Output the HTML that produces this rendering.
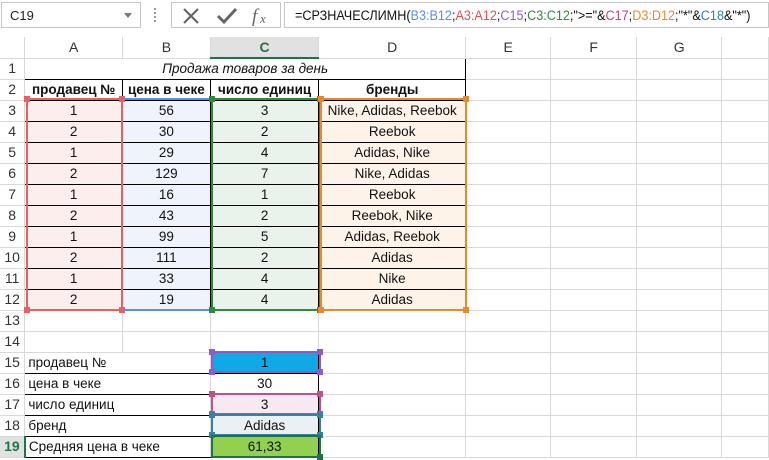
<!DOCTYPE html>
<html><head><meta charset="utf-8"><style>
*{box-sizing:border-box;margin:0;padding:0}
body{width:769px;height:460px;overflow:hidden;background:#fff;font-family:"Liberation Sans",sans-serif;position:relative}
.fb{position:absolute;left:0;top:0;width:769px;height:37px;background:#fff}
.nb{position:absolute;left:1px;top:2px;width:140px;height:26px;border:1px solid #c6c6c6;font-size:13px;padding:5px 8px;color:#222}
.nb:after{content:"";position:absolute;right:8px;top:10px;border:4px solid transparent;border-top:5px solid #777}
.dots{position:absolute;left:154px;top:8px;width:2px;height:14px;border-left:2px dotted #999}
.btns{position:absolute;left:171px;top:2px;width:110px;height:26px;border:1px solid #c6c6c6}
.ff{position:absolute;left:284px;top:2px;width:485px;height:26px;border:1px solid #c6c6c6;font-size:13.5px;padding:5px 10px;white-space:nowrap;color:#111;overflow:hidden}
.ff span.in{display:inline-block;transform:scaleX(0.935);transform-origin:0 0}
table{position:absolute;left:0;top:37px;border-collapse:collapse;table-layout:fixed;font-size:13.5px}
td{height:21px;border:1px solid #d9d9d9;text-align:center;white-space:nowrap;overflow:hidden;padding:0 2px;color:#111;line-height:19px}
td.h{background:#fff;color:#333;font-size:14px}
tr.ch td{height:21px;border-top:none}
td.rh{text-align:center;color:#333;font-size:14px;border-left:none}
.a{background:#fdeeee}.b{background:#eef3fc}.c{background:#eaf3eb}.d{background:#fdf3e8}
.k{border:1px solid #000}
.l{text-align:left;padding-left:3px;border-top:1px solid #000;border-bottom:1px solid #000}
.box{position:absolute;border:2px solid}
.box i{position:absolute;width:6px;height:6px}
</style></head><body>
<div class="fb">
<div class="nb">C19</div>
<div class="dots"></div>
<div class="btns">
<svg width="110" height="26" style="position:absolute;left:0;top:0">
<path d="M12 6 L26 20 M26 6 L12 20" stroke="#666" stroke-width="2.2" fill="none"/>
<path d="M46 13 L52 19 L64 6" stroke="#666" stroke-width="3" fill="none"/>
<text x="80" y="19" font-family="Liberation Serif" font-style="italic" font-size="19" fill="#666">f</text>
<text x="88" y="20" font-family="Liberation Serif" font-style="italic" font-size="13" fill="#666">x</text>
</svg></div>
<div class="ff"><span class="in">=СРЗНАЧЕСЛИМН(<span style="color:#5b8ee6">B3:B12</span>;<span style="color:#e05050">A3:A12</span>;<span style="color:#8e5cc5">C15</span>;<span style="color:#2e8b3e">C3:C12</span>;"&gt;="&amp;<span style="color:#c0408a">C17</span>;<span style="color:#e8892a">D3:D12</span>;"*"&amp;<span style="color:#3a7fa0">C18</span>&amp;"*")</span></div>
</div>
<table>
<colgroup><col style="width:25px"><col style="width:98px"><col style="width:88px"><col style="width:109px"><col style="width:147px"><col style="width:88px"><col style="width:88px"><col style="width:88px"><col style="width:48px"></colgroup>
<tr class="ch"><td class="h" style="border-left:none"></td><td class="h">A</td><td class="h">B</td><td class="h" style="background:#e1e1e1;color:#217346;font-weight:bold;border-bottom:2px solid #217346">C</td><td class="h">D</td><td class="h">E</td><td class="h">F</td><td class="h">G</td><td class="h"></td></tr>
<tr><td class="rh">1</td><td colspan="4" style="font-style:italic;border-bottom:1px solid #000;border-right:1px solid #000">Продажа товаров за день</td><td></td><td></td><td></td><td></td></tr>
<tr><td class="rh">2</td><td class="k" style="font-weight:bold">продавец №</td><td class="k" style="font-weight:bold">цена в чеке</td><td class="k" style="font-weight:bold">число единиц</td><td class="k" style="font-weight:bold">бренды</td><td></td><td></td><td></td><td></td></tr>
<tr><td class="rh">3</td><td class="k a">1</td><td class="k b">56</td><td class="k c">3</td><td class="k d">Nike, Adidas, Reebok</td><td></td><td></td><td></td><td></td></tr>
<tr><td class="rh">4</td><td class="k a">2</td><td class="k b">30</td><td class="k c">2</td><td class="k d">Reebok</td><td></td><td></td><td></td><td></td></tr>
<tr><td class="rh">5</td><td class="k a">1</td><td class="k b">29</td><td class="k c">4</td><td class="k d">Adidas, Nike</td><td></td><td></td><td></td><td></td></tr>
<tr><td class="rh">6</td><td class="k a">2</td><td class="k b">129</td><td class="k c">7</td><td class="k d">Nike, Adidas</td><td></td><td></td><td></td><td></td></tr>
<tr><td class="rh">7</td><td class="k a">1</td><td class="k b">16</td><td class="k c">1</td><td class="k d">Reebok</td><td></td><td></td><td></td><td></td></tr>
<tr><td class="rh">8</td><td class="k a">2</td><td class="k b">43</td><td class="k c">2</td><td class="k d">Reebok, Nike</td><td></td><td></td><td></td><td></td></tr>
<tr><td class="rh">9</td><td class="k a">1</td><td class="k b">99</td><td class="k c">5</td><td class="k d">Adidas, Reebok</td><td></td><td></td><td></td><td></td></tr>
<tr><td class="rh">10</td><td class="k a">2</td><td class="k b">111</td><td class="k c">2</td><td class="k d">Adidas</td><td></td><td></td><td></td><td></td></tr>
<tr><td class="rh">11</td><td class="k a">1</td><td class="k b">33</td><td class="k c">4</td><td class="k d">Nike</td><td></td><td></td><td></td><td></td></tr>
<tr><td class="rh">12</td><td class="k a">2</td><td class="k b">19</td><td class="k c">4</td><td class="k d">Adidas</td><td></td><td></td><td></td><td></td></tr>
<tr><td class="rh">13</td><td></td><td></td><td></td><td></td><td></td><td></td><td></td><td></td></tr>
<tr><td class="rh">14</td><td></td><td></td><td></td><td></td><td></td><td></td><td></td><td></td></tr>
<tr><td class="rh">15</td><td colspan="2" class="l">продавец №</td><td class="k" style="background:#11a8e6">1</td><td></td><td></td><td></td><td></td><td></td></tr>
<tr><td class="rh">16</td><td colspan="2" class="l">цена в чеке</td><td class="k">30</td><td></td><td></td><td></td><td></td><td></td></tr>
<tr><td class="rh">17</td><td colspan="2" class="l">число единиц</td><td class="k" style="background:#f7e9f1">3</td><td></td><td></td><td></td><td></td><td></td></tr>
<tr><td class="rh">18</td><td colspan="2" class="l">бренд</td><td class="k" style="background:#eaf0f3">Adidas</td><td></td><td></td><td></td><td></td><td></td></tr>
<tr><td class="rh" style="background:#e1e1e1;color:#217346;font-weight:bold;border-right:2px solid #217346">19</td><td colspan="2" class="l">Средняя цена в чеке</td><td class="k" style="background:#92d050">61,33</td><td></td><td></td><td></td><td></td><td></td></tr>
</table>

<div class="box" style="left:26px;top:98px;width:97px;height:213px;border-color:#e86060"><i style="left:-4px;top:-4px;background:#e86060"></i><i style="right:-4px;top:-4px;background:#e86060"></i><i style="left:-4px;bottom:-4px;background:#e86060"></i><i style="right:-4px;bottom:-4px;background:#e86060"></i></div>
<div class="box" style="left:123px;top:98px;width:88px;height:213px;border-color:#5b8ee6;border-left:none;border-right:none"></div>
<div class="box" style="left:211px;top:98px;width:110px;height:213px;border-color:#2e8b3e"><i style="left:-4px;top:-4px;background:#2e8b3e"></i><i style="right:-4px;top:-4px;background:#2e8b3e"></i><i style="left:-4px;bottom:-4px;background:#2e8b3e"></i><i style="right:-4px;bottom:-4px;background:#2e8b3e"></i></div>
<div class="box" style="left:320px;top:98px;width:147px;height:213px;border-color:#e8892a"><i style="left:-4px;top:-4px;background:#e8892a"></i><i style="right:-4px;top:-4px;background:#e8892a"></i><i style="left:-4px;bottom:-4px;background:#e8892a"></i><i style="right:-4px;bottom:-4px;background:#e8892a"></i></div>
<div class="box" style="left:211px;top:351px;width:110px;height:22px;border-color:#8e5cc5"><i style="left:-4px;top:-4px;background:#8e5cc5"></i><i style="right:-4px;top:-4px;background:#8e5cc5"></i><i style="left:-4px;bottom:-4px;background:#8e5cc5"></i><i style="right:-4px;bottom:-4px;background:#8e5cc5"></i></div>
<div class="box" style="left:211px;top:393px;width:110px;height:22px;border-color:#c0508a"><i style="left:-4px;top:-4px;background:#c0508a"></i><i style="right:-4px;top:-4px;background:#c0508a"></i><i style="left:-4px;bottom:-4px;background:#c0508a"></i><i style="right:-4px;bottom:-4px;background:#c0508a"></i></div>
<div class="box" style="left:211px;top:414px;width:110px;height:22px;border-color:#3a7fa0"><i style="left:-4px;top:-4px;background:#3a7fa0"></i><i style="right:-4px;top:-4px;background:#3a7fa0"></i><i style="left:-4px;bottom:-4px;background:#3a7fa0"></i><i style="right:-4px;bottom:-4px;background:#3a7fa0"></i></div>
<div class="box" style="left:211px;top:435px;width:110px;height:23px;border-color:#217346"><i style="right:-4px;bottom:-4px;background:#217346"></i></div>
</body></html>
